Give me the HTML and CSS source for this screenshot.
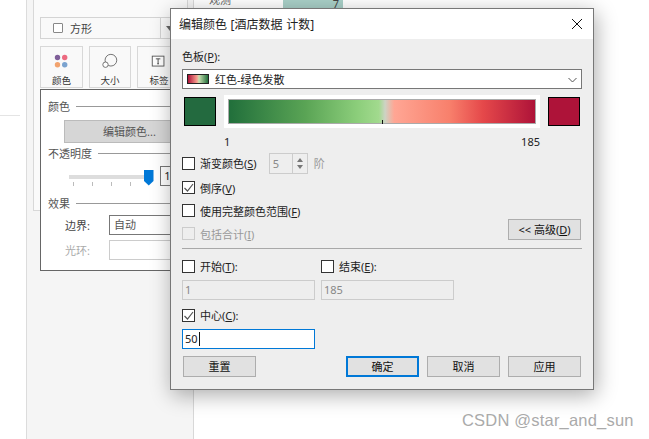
FILE: index.html
```html
<!DOCTYPE html>
<html lang="zh">
<head>
<meta charset="utf-8">
<title>编辑颜色</title>
<link rel="stylesheet" href="styles.css">
</head>
<body>
<div class="page">
  <div class="blank"><div class="blank-rule"></div></div>
  <aside class="side">
    <div class="marks">
      <div class="marks-title">标记</div>
      <div class="type-select">
        <span class="type-box"></span><span class="type-name">方形</span>
        <span class="type-div"></span><span class="type-arrow"></span>
      </div>
      <div class="mark-btns">
        <div class="mark-btn">
          <svg class="mark-ico" width="20" height="20" viewBox="0 0 20 20"><circle cx="5" cy="5" r="3" fill="#7f5f99"/><circle cx="13" cy="5" r="3" fill="#ec6a80"/><circle cx="5" cy="13" r="3" fill="#f2a36e"/><circle cx="13" cy="13" r="3" fill="#7ba3cf"/></svg>
          <span>颜色</span>
        </div>
        <div class="mark-btn narrow">
          <svg class="mark-ico" width="20" height="20" viewBox="0 0 20 20"><circle cx="11" cy="8" r="6.5" fill="none" stroke="#666"/><circle cx="5" cy="13" r="3" fill="#fff" stroke="#666"/></svg>
          <span>大小</span>
        </div>
        <div class="mark-btn wide">
          <svg class="mark-ico" width="20" height="20" viewBox="0 0 20 20"><rect x="2.500" y="3.500" width="13" height="11" fill="#fff" stroke="#555"/><path d="M6.500 6.500h5M9 6.500v5.500M8 12h2" fill="none" stroke="#444"/></svg>
          <span>标签</span>
        </div>
      </div>
      <div class="pop">
        <div class="legend"><span>颜色</span><i></i></div>
        <div class="edit-btn">编辑颜色...</div>
        <div class="legend"><span>不透明度</span><i></i></div>
        <div class="slider-row">
          <div class="slider">
            <div class="track"></div>
            <svg class="thumb" width="10" height="16" viewBox="0 0 10 16"><path d="M0 0h9.500v11L4.750 15.500 0 11z" fill="#0078d7"/></svg>
            <div class="ticks"><b></b><b></b><b></b><b></b></div>
          </div>
          <div class="pct">100%</div>
        </div>
        <div class="legend fx"><span>效果</span><i></i></div>
        <div class="field"><label>边界:</label><div class="fbox">自动</div></div>
        <div class="field off"><label>光环:</label><div class="fbox"></div></div>
      </div>
    </div>
  </aside>
  <main class="sheet">
    <div class="sheet-row"><span class="sheet-name">观测</span><div class="sheet-bar">7</div></div>
  </main>
</div>

<section class="dialog">
  <header class="titlebar">
    <span class="title-text">编辑颜色 [酒店数据 计数]</span>
    <svg class="close" width="12" height="12" viewBox="0 0 12 12"><path d="M1 1l10 10M11 1L1 11" stroke="#111" fill="none" stroke-width="1"/></svg>
  </header>
  <div class="body">
    <div class="lbl-palette">色板(<u>P</u>):</div>
    <div class="combo">
      <span class="mini"></span><span>红色-绿色发散</span>
      <svg class="chev" width="9" height="6" viewBox="0 0 9 6"><path d="M.5 1l4 4 4-4" fill="none" stroke="#555"/></svg>
    </div>
    <div class="ramp-row">
      <span class="swatch green"></span>
      <div class="ramp-wrap"><div class="ramp"><span class="mid"></span></div></div>
      <span class="swatch red"></span>
    </div>
    <div class="ends"><span>1</span><span>185</span></div>

    <div class="chk-row first">
      <span class="cb"></span><span>渐变颜色(<u>S</u>)</span>
      <div class="spin"><span>5</span><div class="spin-btns"><em class="up"></em><em class="dn"></em></div></div>
      <span class="muted">阶</span>
    </div>
    <div class="chk-row"><span class="cb on"><svg width="13" height="13" viewBox="0 0 13 13"><path d="M2.500 7l3 3 5.500-7" fill="none" stroke="#555" stroke-width="1.200"/></svg></span><span>倒序(<u>V</u>)</span></div>
    <div class="chk-row"><span class="cb"></span><span>使用完整颜色范围(<u>F</u>)</span></div>
    <div class="chk-row last">
      <span class="cb dis"></span><span class="muted">包括合计(<u>I</u>)</span>
      <div class="btn adv">&lt;&lt; 高级(<u>D</u>)</div>
    </div>
    <hr class="sep">
    <div class="range">
      <div class="range-col">
        <div class="chk-row tight"><span class="cb"></span><span>开始(<u>T</u>):</span></div>
        <div class="inp dis">1</div>
      </div>
      <div class="range-col">
        <div class="chk-row tight"><span class="cb"></span><span>结束(<u>E</u>):</span></div>
        <div class="inp dis">185</div>
      </div>
    </div>
    <div class="chk-row tight center"><span class="cb on"><svg width="13" height="13" viewBox="0 0 13 13"><path d="M2.500 7l3 3 5.500-7" fill="none" stroke="#555" stroke-width="1.200"/></svg></span><span>中心(<u>C</u>):</span></div>
    <div class="inp focus">50<span class="caret"></span></div>
    <div class="actions">
      <div class="btn">重置</div>
      <div class="right-btns">
        <div class="btn primary">确定</div>
        <div class="btn">取消</div>
        <div class="btn">应用</div>
      </div>
    </div>
  </div>
</section>
<div class="mark">CSDN @star_and_sun</div>
</body>
</html>
```
FILE: styles.css
```css
* { box-sizing: border-box; }
html, body { margin: 0; padding: 0; }
body {
  width: 649px; height: 439px; overflow: hidden; position: relative; background: #fff;
  font-family: "Noto Sans", "Noto Sans CJK SC", sans-serif; font-size: 11px; color: #222;
}
u { text-underline-offset: 1px; }
.page { display: flex; height: 439px; }
.blank { width: 27px; border-right: 1px solid #dcdcdc; padding-top: 115px; }
.blank-rule { width: 20px; border-top: 1px solid #e4e4e4; }
.side { width: 167px; background: #f5f5f5; border-right: 1px solid #d8d8d8; padding-left: 6px; }
.marks { height: 223px; width: 155px; border-left: 1px solid #d8d8d8; border-right: 1px solid #d8d8d8; border-bottom: 1px solid #d8d8d8; background: #fafafa; padding-left: 6px; }
.marks-title { height: 17px; margin-top: -12px; line-height: 16px; color: #555; transform: translateY(-4px); }
.type-select { height: 22px; width: 150px; margin-top: 12px; border: 1px solid #d4d4d4; background: #f9f9f9; display: flex; align-items: center; padding-left: 12px; color: #444; flex: none; }
.type-box { width: 10px; height: 10px; border: 1px solid #888; border-radius: 1px; background: #fff; }
.type-name { margin-left: 7px; }
.type-div { width: 1px; height: 20px; background: #d4d4d4; margin-left: 68px; }
.type-arrow { margin-left: 5px; border: 4px solid transparent; border-top: 5px solid #666; border-bottom: 0; }
.mark-btns { display: flex; gap: 6px; margin-top: 7px; height: 42px; width: 170px; }
.mark-btn { width: 43px; height: 42px; flex: none; border: 1px solid #d8d8d8; background: #f9f9f9; display: flex; flex-direction: column; align-items: center; line-height: 13px; font-size: 9.5px; color: #333; padding-top: 6px; gap: 3px; }
.mark-btn.narrow { width: 42px; }
.mark-btn.wide { width: 44px; }
.mark-ico { display: block; height: 20px; }
.pop { width: 160px; height: 182px; margin-top: 1px; border: 1px solid #666; background: #fff; padding: 7px 0 0 7px; position: relative; }
.legend { display: flex; align-items: center; gap: 6px; height: 18px; color: #555; }
.legend i { flex: 1; border-top: 1px solid #999; }
.edit-btn { width: 120px; height: 23px; margin: 5px 0 0 16px; background: #d6d6d6; border: 1px solid #bbb; line-height: 21px; padding-left: 38px; color: #555; }
.edit-btn + .legend { margin-top: 1px; }
.slider-row { display: flex; height: 32px; margin-top: 1px; }
.slider { width: 116px; position: relative; margin-left: 21px; }
.track { height: 4px; width: 84px; margin-top: 12px; background: #ddd; }
.thumb { position: absolute; left: 75px; top: 7px; }
.ticks { display: flex; gap: 18px; margin: 3px 0 0 4px; }
.ticks b { width: 1px; height: 4px; background: #bbb; }
.pct { width: 40px; height: 20px; border: 1px solid #777; margin: 3px 0 0 -21px; padding-left: 3px; line-height: 18px; }
.legend.fx { margin-top: -1px; }
.field { display: flex; align-items: center; height: 20px; padding-left: 17px; color: #444; }
.legend.fx + .field { margin-top: 3px; }
.field + .field { margin-top: 5px; }
.field label { width: 44px; }
.fbox { flex: 1; height: 20px; border: 1px solid #777; background: #fff; line-height: 18px; padding-left: 4px; color: #555; }
.field.off { color: #aaa; }
.field.off .fbox { border-color: #ccc; }
.sheet { flex: 1; }
.sheet-row { display: flex; height: 8px; line-height: 8px; }
.sheet-name { margin-left: 15px; width: 74px; color: #666; margin-top: -4px; }
.sheet-bar { width: 60px; height: 8px; background: #a9d0c8; text-align: right; padding-right: 4px; color: #444; }

.dialog {
  position: absolute; left: 170px; top: 8px; width: 424px; height: 382px;
  background: #eee; border: 1px solid #777; box-shadow: 2px 5px 20px rgba(0,0,0,.33);
  display: flex; flex-direction: column;
}
.titlebar { height: 30px; flex: none; background: #fff; display: flex; align-items: center; justify-content: space-between; padding: 0 10px 0 8px; color: #222; }
.title-text { font-size: 12px; word-spacing: .5px; }
.body { flex: 1; padding: 9px 11px 0 11px; }
.lbl-palette { height: 21px; line-height: 18px; }
.combo { height: 20px; background: #fff; border: 1px solid #777; display: flex; align-items: center; padding-left: 4px; gap: 6px; position: relative; }
.mini { width: 22px; height: 10px; border: 1px solid #222; background: linear-gradient(90deg, #ae1339, #f8a090 45%, #c8e0b0 55%, #236f3c); }
.chev { position: absolute; right: 4px; top: 7px; }
.ramp-row { display: flex; align-items: center; height: 33px; margin-top: 6px; padding-left: 2px; }
.swatch { width: 32px; height: 29px; border: 1px solid #000; flex: none; }
.swatch.green { background: #236a3f; }
.swatch.red { background: #ae1339; margin-left: 8px; }
.ramp-wrap { width: 316px; height: 33px; margin-left: 8px; background: #fff; padding: 4px; }
.ramp { height: 25px; border: 1px solid #aaa; position: relative; background: linear-gradient(90deg, #216f3b 0%, #5aa455 25%, #8cce7b 42%, #a2da8e 49%, #cdd3c4 51%, #ffa694 54%, #f8806c 72%, #e5484a 83%, #ae1339 100%); }
.mid { position: absolute; left: 153px; bottom: -1px; width: 1px; height: 4px; background: #111; }
.ends { display: flex; justify-content: space-between; padding: 0 42px; height: 20px; line-height: 28px; }
.chk-row { display: flex; align-items: center; gap: 5px; height: 23px; position: relative; }
.chk-row.first { margin-top: 2px; height: 26px; }
.chk-row.tight { height: 14px; }
.cb { width: 13px; height: 13px; flex: none; border: 1px solid #333; background: #fff; display: block; }
.cb svg { display: block; margin: -1px; }
.cb.dis { border-color: #ccc; background: #eee; }
.muted { color: #999; }
.spin { width: 39px; height: 21px; margin-left: 7px; border: 1px solid #ccc; display: flex; justify-content: space-between; align-items: center; padding-left: 3px; color: #888; margin-right: 1px; }
.spin-btns { width: 15px; height: 19px; border-left: 1px solid #ccc; display: flex; flex-direction: column; align-items: center; justify-content: center; gap: 3px; }
.up { border: 3px solid transparent; border-bottom: 4px solid #777; border-top: 0; }
.dn { border: 3px solid transparent; border-top: 4px solid #777; border-bottom: 0; }
.btn { width: 73px; height: 21px; flex: none; background: #e1e1e1; border: 1px solid #adadad; text-align: center; line-height: 19px; color: #111; }
.btn.adv { position: absolute; right: 1px; top: -4px; }
.chk-row.last { height: 21px; margin-top: 1px; }
.sep { margin: 4px 0 0 0; border: 0; border-top: 1px solid #a8a8a8; }
.range { display: flex; gap: 6px; margin-top: 10px; }
.range-col { width: 133px; }
.inp { height: 20px; width: 133px; border: 1px solid #777; background: #fff; line-height: 18px; padding-left: 2px; }
.inp.dis { margin-top: 7px; border-color: #ccc; background: #eee; color: #888; }
.center { margin-top: 8px; }
.inp.focus { margin-top: 7px; border-color: #0078d7; display: flex; align-items: center; }
.caret { width: 1px; height: 14px; background: #111; margin-left: 1px; }
.actions { display: flex; justify-content: space-between; margin-top: 7px; padding: 0 1px; }
.right-btns { display: flex; gap: 8px; }
.btn.primary { border: 2px solid #0078d7; line-height: 17px; }
.mark { position: absolute; left: 462px; top: 411px; font: 16.5px/18px "Liberation Sans", sans-serif; letter-spacing: .2px; color: #aaa; white-space: nowrap; }
```
